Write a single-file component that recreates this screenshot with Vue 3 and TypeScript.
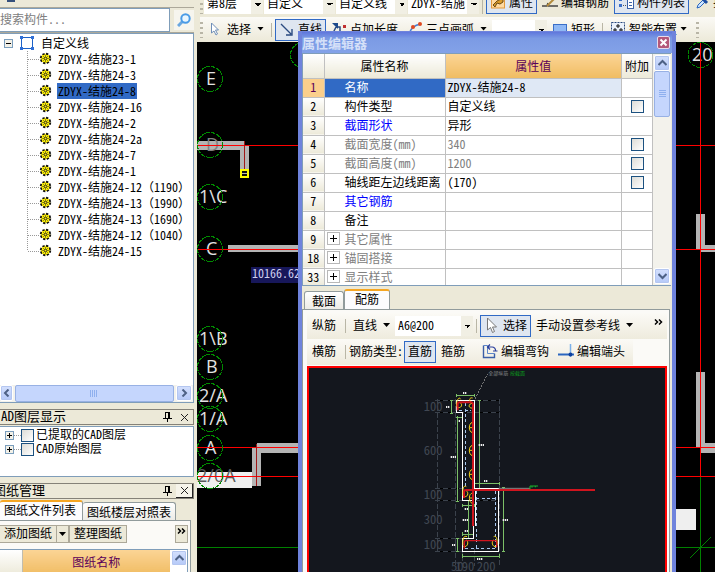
<script setup lang="ts">
import { ref } from 'vue'

interface Prop {
  no: number
  name: string
  value: string
  tone?: 'link' | 'dim'
  check?: boolean
  group?: boolean
}

interface Axis {
  label: string
  x: number
  y: number
}

interface Component {
  name: string
  size?: string
}

const components: Component[] = [
  { name: 'ZDYX-结施23-1' },
  { name: 'ZDYX-结施24-3' },
  { name: 'ZDYX-结施24-8' },
  { name: 'ZDYX-结施24-16' },
  { name: 'ZDYX-结施24-2' },
  { name: 'ZDYX-结施24-2a' },
  { name: 'ZDYX-结施24-7' },
  { name: 'ZDYX-结施24-1' },
  { name: 'ZDYX-结施24-12', size: '1190' },
  { name: 'ZDYX-结施24-13', size: '1990' },
  { name: 'ZDYX-结施24-13', size: '1690' },
  { name: 'ZDYX-结施24-12', size: '1040' },
  { name: 'ZDYX-结施24-15' },
]
const selected = ref(2)

const props: Prop[] = [
  { no: 1, name: '名称', value: 'ZDYX-结施24-8' },
  { no: 2, name: '构件类型', value: '自定义线', check: true },
  { no: 3, name: '截面形状', value: '异形', tone: 'link' },
  { no: 4, name: '截面宽度(mm)', value: '340', tone: 'dim', check: true },
  { no: 5, name: '截面高度(mm)', value: '1200', tone: 'dim', check: true },
  { no: 6, name: '轴线距左边线距离', value: '(170)', check: true },
  { no: 7, name: '其它钢筋', value: '', tone: 'link' },
  { no: 8, name: '备注', value: '' },
  { no: 9, name: '其它属性', value: '', tone: 'dim', group: true },
  { no: 18, name: '锚固搭接', value: '', tone: 'dim', group: true },
  { no: 33, name: '显示样式', value: '', tone: 'dim', group: true },
]

const axes: Axis[] = [
  { label: 'E', x: 206, y: 79 },
  { label: 'D', x: 206, y: 145 },
  { label: '1\\C', x: 199, y: 197 },
  { label: 'C', x: 206, y: 249 },
  { label: '1\\B', x: 199, y: 339 },
  { label: 'B', x: 206, y: 367 },
  { label: '2/A', x: 199, y: 396 },
  { label: '1/A', x: 199, y: 419 },
  { label: 'A', x: 205, y: 448 },
  { label: '2/0A', x: 197, y: 476 },
]

const levels = [
  { t: '100', y: 147 },
  { t: '600', y: 279 },
  { t: '100', y: 411 },
  { t: '300', y: 485 },
  { t: '100', y: 561 },
]
const marks: [number, number, number][] = [
  [189, 91, 12], [138, 133, 12], [176, 175, 5], [236, 247, 17], [152, 283, 17], [252, 355, 12],
  [194, 439, 12], [188, 472, 17], [194, 505, 12], [308, 472, 17], [156, 547, 12], [231, 589, 16],
]
</script>

<template>
  <div class="app">
    <aside class="dock">
      <div class="strip"><i class="nub"></i></div>
      <div class="search">
        <input type="text" placeholder="搜索构件..." aria-label="搜索构件" />
        <button type="button" class="find" aria-label="搜索">
          <svg width="14" height="14" viewBox="0 0 14 14">
            <path d="M5.500 8.500L1 13" stroke="#6aa7e0" stroke-width="3" />
            <circle cx="8.500" cy="5.500" r="4.200" fill="#e9f6ff" stroke="#4a9be6" stroke-width="2" />
          </svg>
        </button>
      </div>
      <div class="tree">
        <div class="root">
          <svg width="35" height="16" viewBox="0 0 35 16">
            <rect x="4.500" y="4.500" width="8" height="8" fill="#f3f1e8" stroke="#7b9ebd" />
            <path d="M6 8.500h5" stroke="#000" />
            <rect x="21.500" y="2.500" width="11" height="11" fill="#fff" stroke="#1c62c8" />
            <path d="M20 1h3v3h-3zM31 1h3v3h-3zM20 12h3v3h-3zM31 12h3v3h-3z" fill="#2f6fd6" />
          </svg>
          <span>自定义线</span>
        </div>
        <ul>
          <li v-for="(c, i) in components" :key="i">
            <svg width="52" height="16" viewBox="0 0 52 16">
              <path :d="i === components.length - 1 ? 'M27.500 0v8' : 'M27.500 0v16'" stroke="#999" stroke-dasharray="1 1" />
              <path d="M28 8.500h11" stroke="#999" stroke-dasharray="1 1" />
              <circle cx="45.500" cy="7.500" r="4.700" fill="#ffec00" stroke="#111" stroke-width="2" stroke-dasharray="2.200 1.490" />
              <circle cx="45.500" cy="7.500" r="3.800" fill="#fff200" />
              <path d="M45.500 4v7M42 7.500h7M43 5l5 5M48 5l-5 5" stroke="#443" stroke-width=".6" />
              <circle cx="45.500" cy="7.500" r="1.300" fill="#ffec00" stroke="#222" stroke-width=".8" />
            </svg>
            <button type="button" :class="{ on: selected === i }" @click="selected = i">{{ c.name }}<template v-if="c.size"><span class="wide">（</span>{{ c.size }}<span class="wide">）</span></template></button>
          </li>
        </ul>
        <div class="hscroll">
          <button type="button" class="sb" aria-label="向左">
            <svg width="8" height="8" viewBox="0 0 8 8"><path d="M5.500 0.500L2 4l3.500 3.500" class="chev" /></svg>
          </button>
          <div class="hthumb"><svg width="9" height="7"><path d="M.5 0v7M2.500 0v7M4.500 0v7M6.500 0v7" stroke="#8fb0ee" /></svg></div>
          <button type="button" class="sb" aria-label="向右">
            <svg width="8" height="8" viewBox="0 0 8 8"><path d="M2.500 0.500L6 4 2.500 7.500" class="chev" /></svg>
          </button>
        </div>
      </div>

      <header class="cap">
        <h2>AD图层显示</h2>
        <button type="button" aria-label="固定"><svg width="9" height="10"><path d="M2 .5h5M2.500 0v6M5.500 0v6M6.500 0v6M0 6.500h9M4.500 7v3" stroke="#000" fill="none" /></svg></button>
        <button type="button" aria-label="关闭"><svg width="9" height="9"><path d="M1 1l7 7M8 1L1 8" stroke="#222" /></svg></button>
      </header>
      <div class="layers">
        <div v-for="(t, i) in ['已提取的CAD图层', 'CAD原始图层']" :key="i" class="layer">
          <svg width="16" height="14" viewBox="0 0 16 14">
            <path d="M9 7.500h7" stroke="#999" stroke-dasharray="1 1" />
            <rect x=".5" y="3.500" width="8" height="8" fill="#f3f1e8" stroke="#7b9ebd" />
            <path d="M2 7.500h5M4.500 5v5" stroke="#000" />
          </svg>
          <input :id="'layer' + i" type="checkbox" />
          <label :for="'layer' + i">{{ t }}</label>
        </div>
      </div>

      <header class="cap">
        <h2 class="cut">图纸管理</h2>
        <button type="button" aria-label="固定"><svg width="9" height="10"><path d="M2 .5h5M2.500 0v6M5.500 0v6M6.500 0v6M0 6.500h9M4.500 7v3" stroke="#000" fill="none" /></svg></button>
        <button type="button" class="raised" aria-label="关闭"><svg width="9" height="9"><path d="M1 1l7 7M8 1L1 8" stroke="#222" /></svg></button>
      </header>
      <nav class="tabs left-tabs">
        <button type="button" class="tab active">图纸文件列表</button>
        <button type="button" class="tab">图纸楼层对照表</button>
      </nav>
      <div class="sheets">
        <div class="sheetbar">
          <button type="button">添加图纸</button>
          <button type="button" class="drop" aria-label="更多"><i class="arrow"></i></button>
          <button type="button">整理图纸</button>
          <button type="button" class="more" aria-label="展开">
            <svg width="9" height="6" viewBox="0 0 9 6"><path d="M1 .5L3.500 3 1 5.500M5 .5L7.500 3 5 5.500" class="dbl" /></svg>
          </button>
        </div>
        <div class="sheetgrid">
          <table><thead><tr><td></td><th>图纸名称</th></tr></thead></table>
          <button type="button" class="sb" aria-label="向上"><svg width="9" height="8" viewBox="0 0 9 8"><path d="M.5 6l4-4 4 4" class="chev" /></svg></button>
        </div>
      </div>
    </aside>

    <main class="work">
      <div class="bar top">
        <i class="grip"></i>
        <select class="pick short" aria-label="楼层"><option>第8层</option></select>
        <select class="pick" aria-label="类别"><option>自定义</option></select>
        <select class="pick" aria-label="类型"><option>自定义线</option></select>
        <select class="pick" aria-label="构件"><option>ZDYX-结施</option></select>
        <i class="sep"></i>
        <button type="button" class="tool on">
          <svg width="16" height="16" viewBox="0 0 16 16"><rect x="1.500" y="1" width="13" height="13" fill="#ffd9a0" stroke="#e39a3c" /><path d="M3 11l4-4 6-3v4l-3 2-3-1-2 4z" fill="#d99a2b" stroke="#6b4a12" /></svg>
          属性
        </button>
        <button type="button" class="tool">
          <svg width="16" height="16" viewBox="0 0 16 16"><path d="M0 12h5l1-3M6 12h10" stroke="#444" stroke-width="1.500" fill="none" /><path d="M5 12l9-9" stroke="#b38b3d" stroke-width="2" /></svg>
          编辑钢筋
        </button>
        <button type="button" class="tool on">
          <svg width="16" height="16" viewBox="0 0 16 16"><path d="M1 4h3v3H1zM1 10h3v3H1z" fill="#3a6fc8" /><path d="M5 5.500h3M5 11.500h3" stroke="#555" stroke-dasharray="1 1" /><rect x="9.500" y="1.500" width="6" height="13" fill="#fff" stroke="#3c62a8" /><path d="M11 5.500h3M11 8.500h3M11 11.500h3" stroke="#3c62a8" /></svg>
          构件列表
        </button>
        <button type="button" class="tool">
          <svg width="16" height="16" viewBox="0 0 16 16"><path d="M3 14l1-3 5-5 2 2-5 5z" fill="#cfe6ff" stroke="#2a66c0" /><path d="M8 4l5 5M10 6l3-4" stroke="#1d4fa3" stroke-width="3" /></svg>
          拾取
        </button>
      </div>
      <div class="bar second">
        <i class="grip"></i>
        <button type="button" class="tool">
          <svg width="16" height="16" viewBox="0 0 16 16"><path d="M3.500 2v10l2.500-2 2 4 1.500-1-2-4h3z" fill="#fff" stroke="#6f8fb8" /></svg>
          选择<i class="arrow far"></i>
        </button>
        <i class="sep"></i>
        <button type="button" class="tool on">
          <svg width="16" height="16" viewBox="0 0 16 16"><path d="M2 3l10 10M13 8v6H7" stroke="#2a4a80" stroke-width="1.400" fill="none" /></svg>
          直线
        </button>
        <button type="button" class="tool">
          <svg width="16" height="16" viewBox="0 0 16 16"><path d="M1 14L5 6M5 6h4v5h4" stroke="#2a4a80" stroke-width="1.500" fill="none" /><path d="M1 2h6v6z" fill="#1d4a8c" /><rect x="12" y="4" width="3" height="3" fill="#c03030" /></svg>
          点加长度
        </button>
        <button type="button" class="tool">
          <svg width="16" height="16" viewBox="0 0 16 16"><path d="M2 14C3 8 7 4 14 3" stroke="#4a7fd0" stroke-width="1.500" fill="none" /><circle cx="3" cy="12" r="2" fill="#e04a20" /><circle cx="6" cy="6" r="2" fill="#e04a20" /><circle cx="13" cy="3" r="2" fill="#e04a20" /></svg>
          三点画弧<i class="arrow far"></i>
        </button>
        <select class="pick blank" aria-label="弧参数"><option></option></select>
        <button type="button" class="tool">
          <svg width="16" height="16" viewBox="0 0 16 16"><rect x="1.500" y="3.500" width="13" height="10" fill="#8fb8f5" stroke="#3a6fc8" /></svg>
          矩形
        </button>
        <i class="sep"></i>
        <button type="button" class="tool">
          <svg width="16" height="16" viewBox="0 0 16 16"><rect x="1.500" y="1.500" width="13" height="13" fill="#eaf1fb" stroke="#27477c" stroke-dasharray="2 1" /><path d="M8 3v4M6 5h4M5 7v4M3 9h4M11 7v4M9 9h4" stroke="#111" /></svg>
          智能布置<i class="arrow"></i>
        </button>
        <i class="grip last"></i>
      </div>

      <svg class="cad" viewBox="197 42 518 530" preserveAspectRatio="xMinYMin slice">
        <g fill="#b4b4b4">
          <path d="M197 141h48v9h-48zM240 146h9v30h-9zM228 245h80v7h-80zM257 443h50v10h-50zM252 447h9v39h-9z" />
          <path d="M696 214h9v31h10v7h-14v-2h-5zM696 372h9v71h10v10h-14v-6h-5z" />
        </g>
        <path d="M197 472h55v16h-55zM676 509h20v21h-20z" fill="#efefef" />
        <g class="axis">
          <text v-for="a in axes" :key="a.label" :x="a.x" :y="a.y + 6" :class="{ dark: a.label === '2/0A', mid: a.label === 'D' }">{{ a.label }}</text>
          <text x="692" y="61">20</text>
        </g>
        <path d="M197 145.500h518M197 249.500h518M197 447.500h518M197 476.500h518M700.500 42v435" stroke="#f00" />
        <path d="M244.500 141v34M256.500 444v42" stroke="#a01818" />
        <path d="M197 547.500h518M700.500 477v95M690 558l21-21" stroke="#008000" />
        <g fill="none" stroke="#008a00">
          <circle v-for="a in axes" :key="a.label" cx="210" :cy="a.y" r="12.500" stroke-dasharray="4 1" />
          <circle cx="303" cy="55" r="12.500" stroke-dasharray="4 1" />
          <circle cx="700.500" cy="55" r="12.500" stroke-dasharray="4 1" />
        </g>
        <rect x="241" y="170" width="7" height="7" fill="#111" stroke="#ff0" stroke-width="2" />
        <path d="M242 173.500h5" stroke="#bba" />
        <rect x="251" y="267" width="60" height="16" fill="#17175a" />
        <text x="252" y="278" class="coord">10166.62</text>
      </svg>

      <section class="dialog">
        <header class="title">
          <h1>属性编辑器</h1>
          <button type="button" aria-label="关闭"><svg width="9" height="9" viewBox="0 0 9 9"><path d="M1.500 1.500l6 6M7.500 1.500l-6 6" stroke="#fff" stroke-width="2" /></svg></button>
        </header>
        <div class="body">
          <div class="gridbox">
            <table class="grid">
              <colgroup><col class="c1" /><col class="c2" /><col /><col class="c4" /></colgroup>
              <thead>
                <tr><td></td><th>属性名称</th><th class="hot">属性值</th><th>附加</th></tr>
              </thead>
              <tbody>
                <tr v-for="p in props" :key="p.no" :class="[p.tone, { cur: p.no === 1 }]">
                  <th scope="row">{{ p.no }}</th>
                  <td class="name">
                    <span class="namebox">
                      <button v-if="p.group" type="button" class="plus" aria-label="展开"><svg width="7" height="7"><path d="M0 3.500h7M3.500 0v7" stroke="#000" /></svg></button>
                      <i v-else class="plus none"></i>
                      <span>{{ p.name }}</span>
                    </span>
                  </td>
                  <td class="value">{{ p.value }}</td>
                  <td class="add"><input v-if="p.check" type="checkbox" :aria-label="p.name" /></td>
                </tr>
              </tbody>
            </table>
            <div class="vscroll">
              <button type="button" class="sb" aria-label="向上"><svg width="9" height="8" viewBox="0 0 9 8"><path d="M.5 6l4-4 4 4" class="chev" /></svg></button>
              <div class="vthumb"><svg width="7" height="8"><path d="M0 .5h7M0 2.500h7M0 4.500h7M0 6.500h7" stroke="#8fb0ee" /></svg></div>
              <span class="fill"></span>
              <button type="button" class="sb" aria-label="向下"><svg width="9" height="8" viewBox="0 0 9 8"><path d="M.5 2l4 4 4-4" class="chev" /></svg></button>
            </div>
          </div>
          <nav class="tabs dlg-tabs">
            <button type="button" class="tab">截面</button>
            <button type="button" class="tab active">配筋</button>
          </nav>
          <div class="page">
            <div class="bar inner">
              <button type="button" class="tool">纵筋</button>
              <i class="sep"></i>
              <button type="button" class="tool">直线<i class="arrow far"></i></button>
              <select class="pick rebar" aria-label="钢筋信息"><option>A6@200</option></select>
              <i class="sep"></i>
              <button type="button" class="tool on">
                <svg width="16" height="16" viewBox="0 0 16 16"><path d="M3.500 1v12l3-2.500 2 5 2-1-2-4.500h4z" fill="#fff" stroke="#777" /></svg>
                选择
              </button>
              <button type="button" class="tool">手动设置参考线<i class="arrow far"></i></button>
              <button type="button" class="tool push" aria-label="展开">
                <svg width="9" height="6" viewBox="0 0 9 6"><path d="M1 .5L3.500 3 1 5.500M5 .5L7.500 3 5 5.500" class="dbl" /></svg>
              </button>
            </div>
            <div class="bar inner fit">
              <button type="button" class="tool">横筋</button>
              <i class="sep"></i>
              <span class="lbl">钢筋类型:</span>
              <button type="button" class="tool on">直筋</button>
              <button type="button" class="tool">箍筋</button>
              <i class="sep clear"></i>
              <button type="button" class="tool">
                <svg width="16" height="16" viewBox="0 0 16 16"><path d="M1.500 2.500v12h11v-4" fill="none" stroke="#3a5fa8" stroke-width="1.400" /><path d="M1.500 2.500h4v8h7" fill="none" stroke="#5d86c9" /><path d="M6 4h4a3.500 3.500 0 0 1 3.500 4M8 1.500L5.500 4 8 6.500M11 8h4.500" fill="none" stroke="#2a3f9c" stroke-width="1.200" /></svg>
                编辑弯钩
              </button>
              <button type="button" class="tool">
                <svg width="16" height="16" viewBox="0 0 16 16"><path d="M0 11.500h16" stroke="#2a66c0" stroke-width="2" /><path d="M12.500 1v13" stroke="#7bb0ea" stroke-width="1.500" /><circle cx="12.500" cy="11.500" r="2" fill="#0d3f9c" /></svg>
                编辑端头
              </button>
            </div>
            <div class="view">
              <svg viewBox="-273 18 1068 612" preserveAspectRatio="xMinYMin slice">
                <g class="lvl">
                  <text v-for="(l, i) in levels" :key="i" x="71" :y="l.y">{{ l.t }}</text>
                  <text x="153" y="628">50</text><text x="166" y="628">190</text><text x="230" y="628">200</text>
                </g>
                <g fill="none" stroke-width="3" shape-rendering="crispEdges">
                  <path d="M112 112v458M166 112v500M298 112v500M187 560v52M223 560v52" stroke="#3b424c" stroke-dasharray="15 6" />
                  <path d="M106 115h194M106 151h194M106 379h80M106 415h194M106 529h80M106 568h80" stroke="#000" />
                  <path d="M106 115h194M106 151h194M106 379h80M106 415h194M106 529h80M106 568h80" stroke="#3b424c" stroke-dasharray="15 9" />
                  <path d="M226 110l36-74" stroke="#777" stroke-dasharray="6 4" />
                  <path d="M178 145h36M196 124v250M229 388v170M229 409h58M287 388v170M196 559h90" stroke="#a9c8ee" stroke-dasharray="9 7" />
                  <path d="M169 101h55M154 115v38M172 163v256M169 166h19M238 115v264M223 364h74M310 376v192M187 430h36M206 415v114M187 516h34M172 529v39M187 582h110" stroke="#7cc067" />
                  <path d="M169 96v10M224 96v10M149 115h10M149 153h10M167 418h10M233 115h10M233 379h10M223 359v10M297 359v10M305 376h10M305 568h10M187 425v10M223 425v10M201 415h10M201 529h10M187 511v10M221 511v10M167 529h10M167 568h10M187 577v10M297 577v10" stroke="#7cc067" />
                  <path d="M169 152V115h55v264h72v189H187v-39h34V415h-34V152zM227 379v114" stroke="#fff" />
                </g>
                <g fill="none" stroke="#f4d41a" stroke-width="3">
                  <path d="M170 134c-2-20 8-32 12-22M172 137c16 2 16-14 6-16M218 108c-12-4-12 14 0 14M218 124c-14 0-14 16 0 14" />
                  <path d="M217 181c-12 3-12 28 0 31M217 197h-9M217 250c-12 3-12 28 0 31M217 265h-9M217 322c-12 3-12 28 0 31M217 337h-9" />
                  <path d="M189 402c-2-26 2-32 10-28M192 404c14 2 14-16 6-18M218 394c-14-2-12 30 0 30M218 408h-9" />
                  <path d="M189 550c-2-24 4-30 12-26M190 554c16 2 16-18 8-20M291 550c2-24-4-30-10-26M290 554c-16 2-16-18-8-20" />
                </g>
                <g fill="none" stroke="#d0141e" stroke-width="6">
                  <path d="M173 145v-18q0-6 6-6h34q6 0 6 6v365M192 408v-18q0-6 6-6h387" />
                  <path d="M193 560v-20q0-4 5-4h88q4 0 4 4v16" stroke-width="4" />
                </g>
                <path d="M296 379h94" stroke="#888" stroke-width="3" />
                <path d="M390 382v-10h24M396 372v5M406 372v4" stroke="#19b52c" stroke-width="3" fill="none" />
                <path v-for="(m, i) in marks" :key="i" :d="`M${m[0]} ${m[1] + 2}h${m[2]}`" stroke="#eee" stroke-width="6" stroke-dasharray="4 2" />
                <text x="265" y="39" class="note">全部纵筋</text>
                <text x="330" y="39" class="note green">按截面</text>
              </svg>
            </div>
          </div>
        </div>
      </section>
    </main>
  </div>
</template>

<style>
body {
  margin: 0;
  overflow: hidden;
}
</style>

<style scoped>
* {
  box-sizing: border-box;
}
.app {
  display: flex;
  height: 100vh;
  overflow: hidden;
  background: #ece9d8;
  color: #000;
  font: 12px/14px "Noto Sans Mono CJK SC", "Noto Sans CJK SC", sans-serif;
  font-feature-settings: "hwid";
}
button,
input,
select {
  font: inherit;
  font-feature-settings: inherit;
  color: inherit;
  margin: 0;
  padding: 0;
  border: 0;
  border-radius: 0;
  background: none;
  white-space: nowrap;
}
svg {
  display: block;
  flex: none;
}
h1,
h2,
ul {
  margin: 0;
  padding: 0;
  list-style: none;
}
.wide {
  font-feature-settings: normal;
}
.chev {
  fill: none;
  stroke: #4d6185;
  stroke-width: 2;
}
.dbl {
  fill: none;
  stroke: #000;
  stroke-width: 1.5px;
}
.arrow {
  display: block;
  flex: none;
  width: 7px;
  height: 4px;
  background: #000;
  clip-path: polygon(0 0, 100% 0, 50% 100%);
}
.arrow.far {
  margin-left: 3px;
}
input[type="checkbox"] {
  appearance: none;
  flex: none;
  width: 13px;
  height: 13px;
  border: 1px solid #1c5180;
  background: linear-gradient(135deg, #dcdcd7, #fff);
}

/* left dock */
.dock {
  flex: none;
  display: flex;
  flex-direction: column;
  width: 194px;
  margin-right: 3px;
  overflow: hidden;
}
.strip {
  height: 8px;
  padding-left: 7px;
  border-bottom: 1px solid #aca899;
}
.nub {
  display: block;
  width: 8px;
  height: 2px;
  background: #35507c;
}
.search {
  display: flex;
  align-items: center;
  gap: 4px;
  height: 25px;
  border-bottom: 1px solid #aca899;
}
.search input {
  flex: 1;
  min-width: 0;
  height: 24px;
  padding-bottom: 4px;
  border: 1px solid #7f9db9;
  border-left: 0;
  background: #fff;
}
.search input::placeholder {
  color: #808080;
  opacity: 1;
}
.find {
  width: 20px;
  height: 20px;
  display: grid;
  place-items: center;
  background: #f6f5ee;
}
.tree {
  display: flex;
  flex-direction: column;
  height: 370px;
  padding-top: 1px;
  border: solid #7f9db9;
  border-width: 1px 1px 1px 0;
  background: #fff;
}
.root {
  display: flex;
  align-items: center;
  gap: 6px;
  height: 16px;
}
.tree ul {
  flex: 1;
}
.tree li {
  display: flex;
  height: 16px;
  gap: 5px;
}
.tree li button {
  height: 16px;
  padding: 0 1px;
}
.tree li button.on {
  background: #316ac5;
}
.hscroll {
  display: flex;
  height: 17px;
  gap: 2px;
  padding-right: 1px;
  background: #f3f2ec;
}
.sb {
  flex: none;
  display: grid;
  place-items: center;
  width: 16px;
  height: 16px;
  border: 1px solid #fff;
  border-radius: 2px;
  background: linear-gradient(#d4e0fd, #b5c9f8);
  box-shadow: inset 0 0 0 1px #b4c6f0;
}
.hscroll .sb:first-child {
  width: 13px;
}
.hthumb,
.vthumb {
  display: grid;
  place-items: center;
  border: 1px solid #98b1e4;
  border-radius: 2px;
  background: #c5d6fd;
}
.hthumb {
  flex: 1;
}
.cap {
  display: flex;
  align-items: center;
  flex: none;
  height: 16px;
  margin-top: 6px;
  margin-bottom: 1px;
  padding-left: 1px;
  border: solid #858278;
  border-width: 1px 1px 1px 0;
}
.cap h2 {
  flex: 1;
  font-size: 13px;
  font-weight: 400;
  line-height: 14px;
  padding-bottom: 2px;
}
.cap h2.cut {
  margin-left: -8px;
}
.cap button {
  display: grid;
  place-items: center;
  width: 17px;
  height: 14px;
}
.cap button.raised {
  border: solid #222;
  border-width: 0 1px 1px 0;
  background: #f6f4ea;
}
.layers {
  flex: none;
  height: 51px;
  padding: 1px 0 0 5px;
  border: solid #7f9db9;
  border-width: 1px 1px 1px 0;
  background: #fff;
}
.layer {
  display: flex;
  align-items: center;
  height: 14px;
}
.layer label {
  margin-left: 2px;
  padding-bottom: 2px;
}
.tabs {
  display: flex;
  align-items: flex-end;
  flex: none;
}
.tab {
  height: 18px;
  border: 1px solid #919b9c;
  border-bottom: 0;
  border-radius: 3px 3px 0 0;
  background: linear-gradient(#fff, #ecebe6);
}
.tab.active {
  height: 20px;
  padding-bottom: 2px;
  border-top: 2px solid #f5a623;
  background: #fcfcfe;
}
.left-tabs .tab {
  padding-left: 4px;
  padding-right: 4px;
  border-left-width: 0;
}
.left-tabs .active {
  padding-right: 6px;
}
.sheets {
  flex: 1;
  min-height: 0;
  margin-right: 3px;
  border: solid #919b9c;
  border-width: 1px 1px 0 0;
  background: #fbfaf7;
}
.sheetbar {
  display: flex;
  padding: 4px 2px 6px 0;
}
.sheetbar button {
  height: 18px;
  padding: 0 4px 2px;
  border: 1px solid #aca899;
  border-left-width: 0;
  background: #ece9d8;
}
.sheetbar .drop {
  padding: 0 2px;
  border-right-width: 2px;
}
.sheetbar .more {
  margin-left: auto;
  border-left-width: 1px;
  padding: 0 1px 6px;
}
.sheetgrid {
  display: flex;
  align-items: flex-start;
  gap: 1px;
  margin-right: 2px;
  border: solid #7f9db9;
  border-width: 1px 1px 0 0;
  background: #fff;
}
.sheetgrid table {
  flex: 1;
  border-collapse: collapse;
}
.sheetgrid tr {
  height: 25px;
}
.sheetgrid td {
  width: 22px;
  padding: 0;
  border-right: 1px solid #c0bdb0;
  background: linear-gradient(#fff, #ece9d8);
}
.sheetgrid th,
.grid .hot {
  padding: 0;
  font-weight: 400;
  color: #5a005a;
  background: linear-gradient(#fbd495, #f0bc62);
}
.sheetgrid th {
  padding-bottom: 2px;
}

/* toolbars */
.work {
  flex: 1;
  min-width: 0;
  position: relative;
  display: flex;
  flex-direction: column;
}
.bar {
  display: flex;
  align-items: center;
  flex: none;
}
.top {
  align-items: flex-end;
  height: 14px;
  padding-left: 3px;
  gap: 1px;
  overflow: hidden;
}
.second {
  height: 25px;
  margin: 3px 0 0 3px;
  gap: 1px;
  background: linear-gradient(#fbfaf6, #ece9d8);
}
.grip {
  flex: none;
  width: 3px;
  height: 16px;
  background: repeating-linear-gradient(#b8b5a6 0 2px, transparent 2px 5px);
}
.grip.last {
  margin-left: 4px;
}
.sep {
  flex: none;
  width: 1px;
  height: 14px;
  margin: 0 2px;
  background: #b9b6a6;
}
.sep.clear {
  margin: 0 3px;
  background: none;
}
.tool {
  display: flex;
  align-items: center;
  flex: none;
  gap: 3px;
  height: 22px;
  padding: 0 3px 2px;
  border: 1px solid transparent;
}
.tool.on {
  border-color: #316ac5;
  background: #dfe6f0;
}
.pick {
  appearance: none;
  flex: none;
  width: 71px;
  height: 20px;
  padding: 0 3px 3px;
  background:
    linear-gradient(to top right, transparent 50%, #000 50%) right 5px top 9px / 3px 3px no-repeat,
    linear-gradient(to top left, transparent 50%, #000 50%) right 2px top 9px / 3px 3px no-repeat,
    linear-gradient(#f1efe4, #f1efe4) right 0 top 0 / 12px 100% no-repeat,
    #fff;
}
.pick.short {
  width: 59px;
}
.pick.blank {
  width: 55px;
}
.pick.rebar {
  width: 78px;
}
.cad {
  width: 100%;
  flex: 1;
  min-height: 0;
  background: #000;
  shape-rendering: crispEdges;
}
.axis text {
  font: 18px "Open Sans", sans-serif;
  fill: #e2e2e2;
}
.axis .dark {
  fill: #5a5a5a;
}
.axis .mid {
  fill: #808080;
}
.coord {
  fill: #cfcfee;
}

/* property dialog */
.dialog {
  position: absolute;
  top: 31px;
  bottom: 0;
  left: 101px;
  right: 39px;
  display: flex;
  flex-direction: column;
  border: solid #6f83dc;
  border-width: 1px 4px 0;
  background: #ece9d8;
}
.title {
  display: flex;
  align-items: center;
  justify-content: space-between;
  flex: none;
  height: 21px;
  padding-right: 2px;
  background: linear-gradient(#5f77dc, #7b9ae4 30%, #83a2e8);
}
.title h1 {
  color: #d5e0f8;
  font-size: 13px;
  line-height: 18px;
}
.title button {
  display: grid;
  place-items: center;
  width: 13px;
  height: 13px;
  border: 1px solid #e6dcec;
  border-radius: 2px;
  background: #b4587a;
}
.body {
  display: flex;
  flex-direction: column;
  flex: 1;
  min-height: 0;
}
.gridbox {
  display: flex;
  align-items: flex-start;
  flex: none;
  height: 233px;
  margin-right: 1px;
  overflow: hidden;
  border: 1px solid #7f9db9;
  border-right: 0;
  background: #fff;
}
.grid {
  flex: 1;
  table-layout: fixed;
  border-collapse: collapse;
}
.c1 {
  width: 21px;
}
.c2 {
  width: 121px;
}
.c4 {
  width: 31px;
}
.grid tr {
  height: 19px;
}
.grid thead tr {
  height: 24px;
}
.grid th,
.grid td {
  padding: 0;
  border: solid #c0c0c0;
  border-width: 0 1px 1px 0;
  font-weight: 400;
}
.grid tbody th,
.grid tbody td {
  padding-bottom: 2px;
}
.grid thead th:not(.hot),
.grid thead td,
.grid tbody th {
  background: linear-gradient(#fff, #ece9d8);
}
.namebox {
  display: flex;
  align-items: center;
  gap: 5px;
  padding-left: 2px;
}
.plus {
  display: grid;
  place-items: center;
  flex: none;
  width: 13px;
  height: 13px;
  border: 1px solid #b8b8b8;
}
.plus.none {
  border-color: transparent;
}
.link .name {
  color: #00f;
}
.dim .name,
.dim .value {
  color: #808080;
}
.grid .value {
  padding-left: 2px;
}
.cur .name {
  color: #fff;
  background: #316ac5;
}
.grid .cur th {
  color: #5a005a;
  background: #fbcf8c;
}
.cur .value {
  background: #dfe8f5;
}
.grid tbody .add {
  padding: 0;
}
.add input {
  display: block;
  margin: 0 auto;
}
.vscroll {
  display: flex;
  flex-direction: column;
  flex: none;
  width: 18px;
  height: 100%;
  padding: 1px;
  background: #f3f2ec;
}
.vthumb {
  height: 46px;
}
.fill {
  flex: 1;
}
.dlg-tabs {
  height: 23px;
  padding-left: 2px;
}
.dlg-tabs .tab {
  width: 40px;
}
.dlg-tabs .tab.active {
  width: 46px;
}
.page {
  display: flex;
  flex-direction: column;
  flex: 1;
  min-height: 0;
  margin-right: 2px;
  padding: 3px 2px 0 4px;
  border: solid #919b9c;
  border-width: 1px 1px 0;
  background: #fbfaf7;
}
.inner {
  height: 26px;
  gap: 1px;
  background: linear-gradient(#fbfaf6, #eeebdd);
}
.inner .tool:first-child {
  padding-left: 4px;
  padding-right: 5px;
}
.inner.fit {
  align-self: flex-start;
  padding-right: 4px;
}
.lbl {
  padding-bottom: 2px;
}
.tool.push {
  margin-left: auto;
  padding-bottom: 8px;
}
.view {
  flex: 1;
  min-height: 0;
  margin-top: 1px;
  border: 2px solid #f00;
  border-bottom: 0;
  background: #14171e;
  overflow: hidden;
}
.view svg {
  width: 100%;
  height: 100%;
}
.lvl text {
  font: 38px "Noto Sans Mono CJK SC", "Noto Sans CJK SC", sans-serif;
  fill: #404752;
}
.note {
  font-size: 15px;
  fill: #8a8a8a;
}
.note.green {
  fill: #0b9a1c;
}
</style>
